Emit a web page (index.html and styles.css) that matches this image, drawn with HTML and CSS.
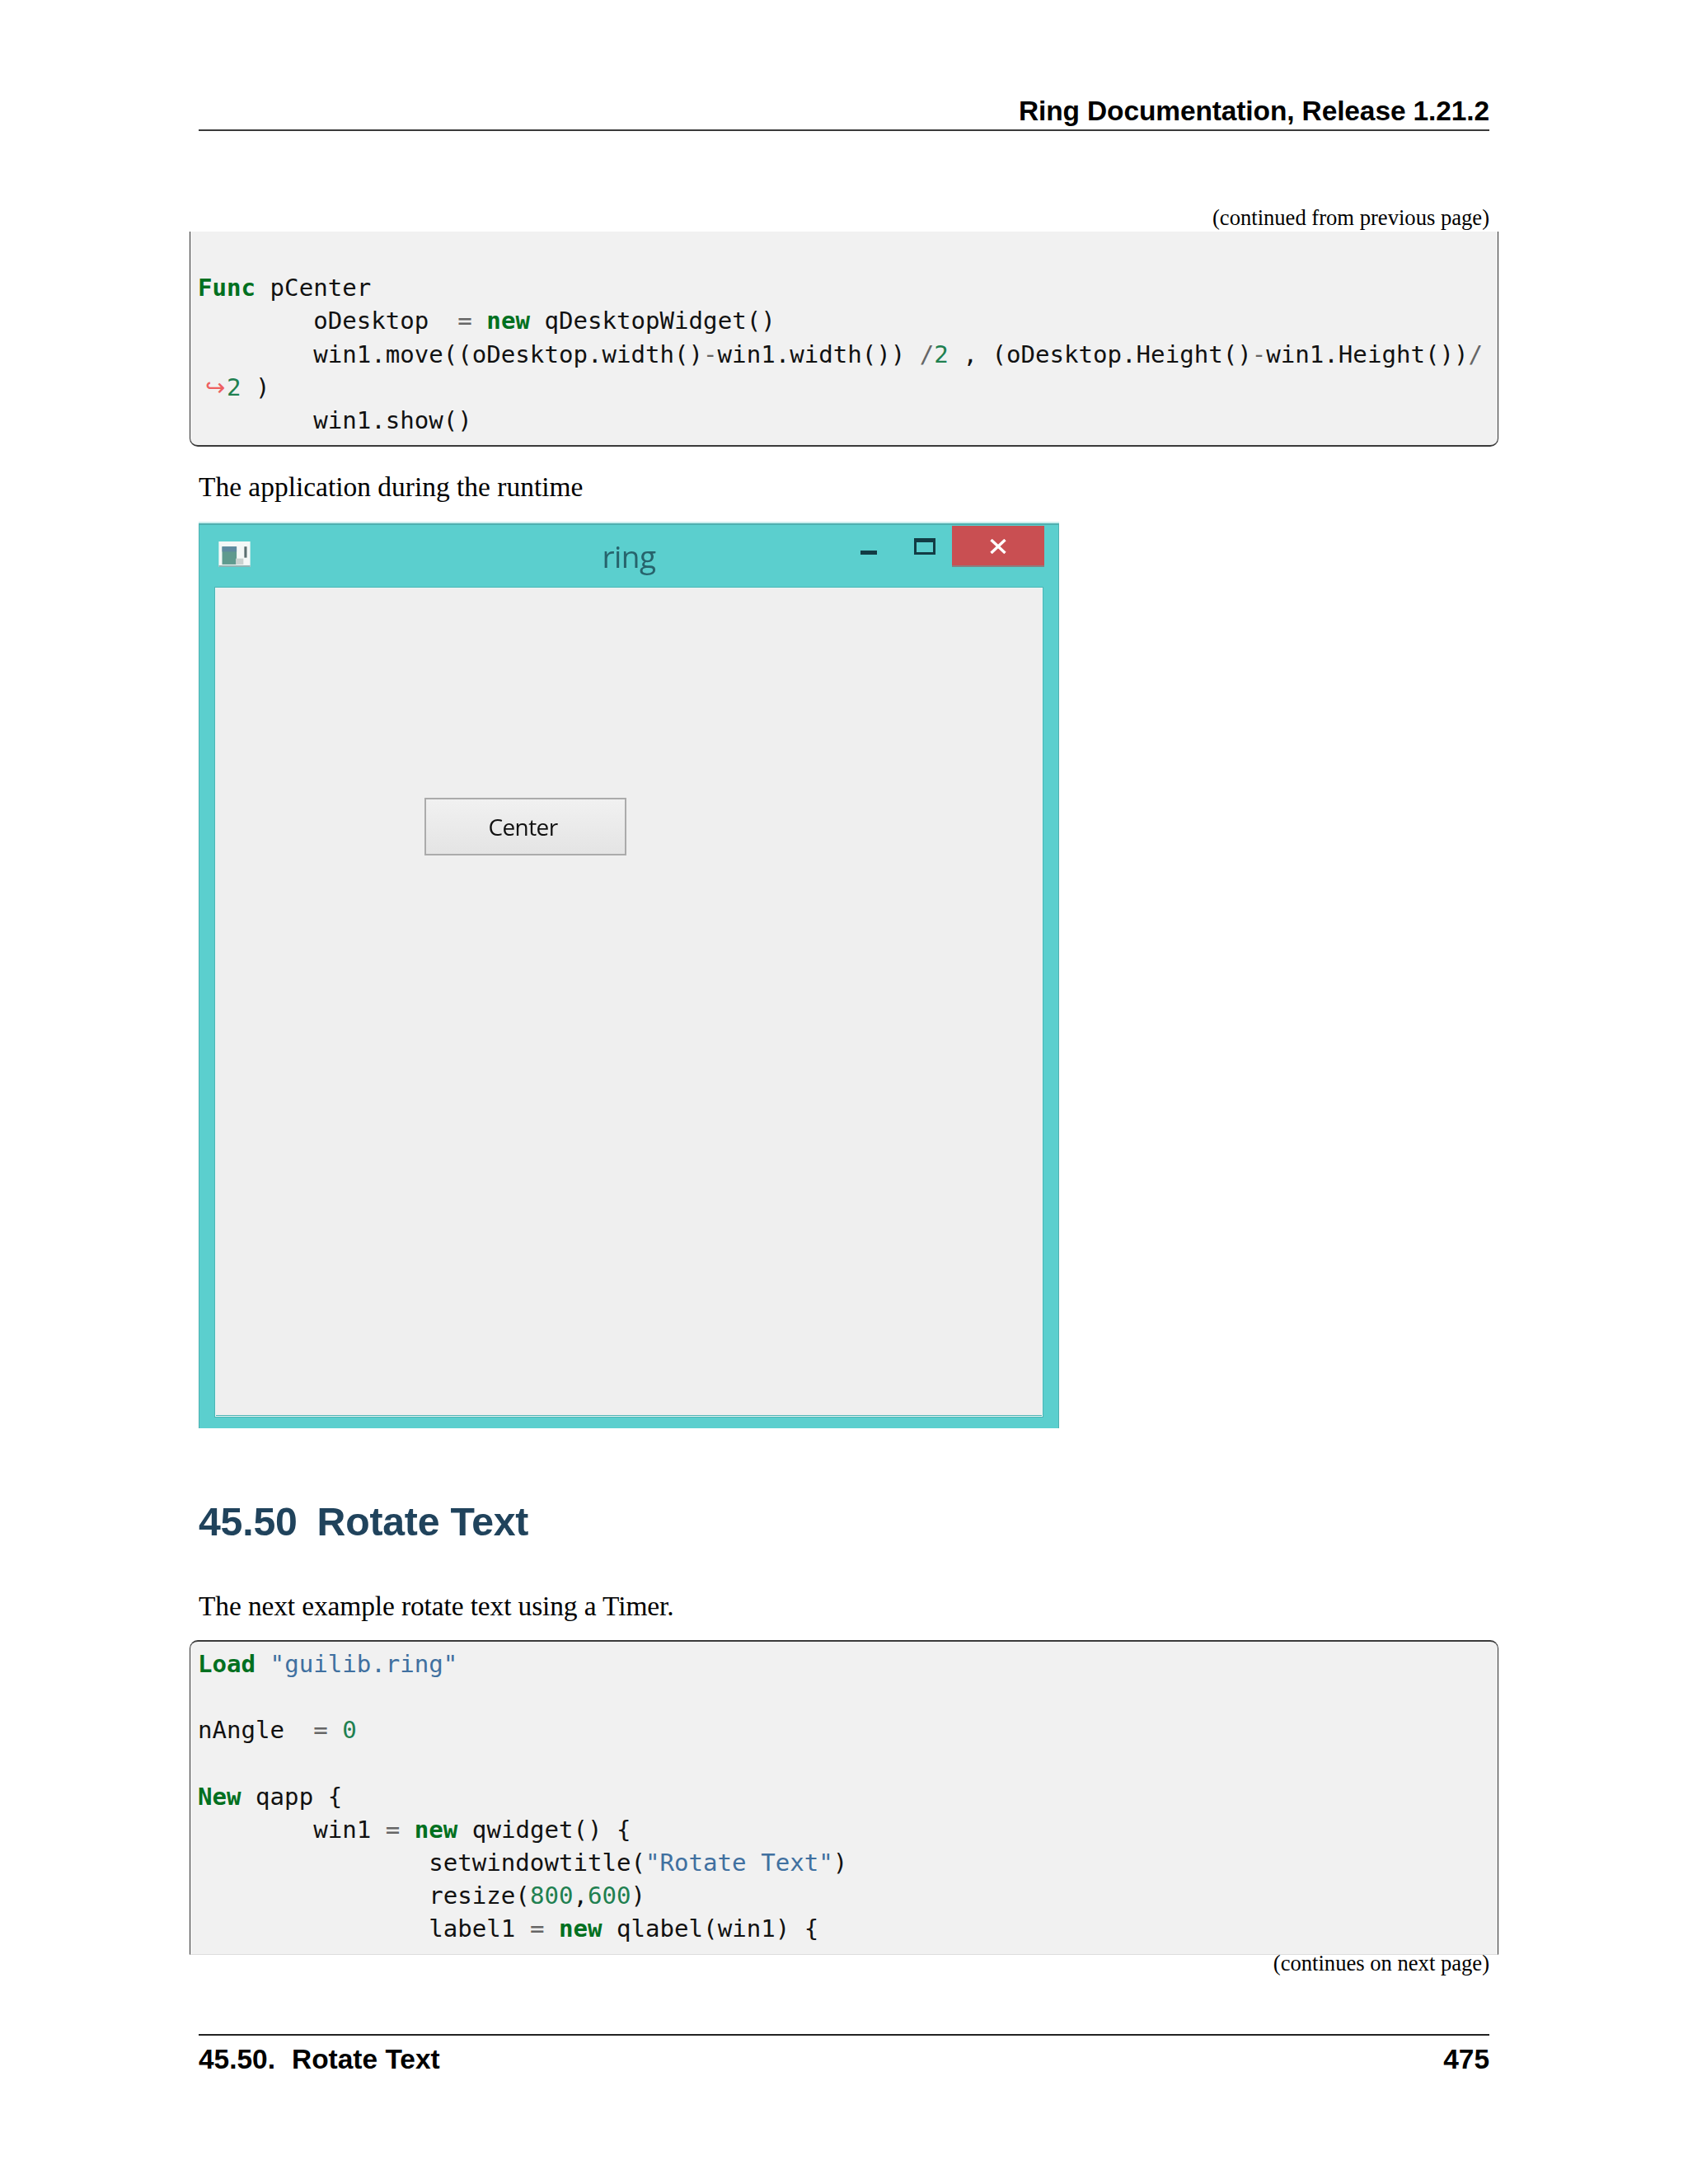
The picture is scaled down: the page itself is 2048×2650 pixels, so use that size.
FILE: index.html
```html
<!DOCTYPE html>
<html lang="en">
<head>
<meta charset="utf-8">
<title>Ring Documentation</title>
<link rel="stylesheet" href="styles.css">
</head>
<body>
<div class="page">
  <header class="running-head">Ring Documentation, Release 1.21.2</header>

  <div class="cont cont-top">(continued from previous page)</div>
  <div class="code code-end">
    <div class="line"></div>
    <div class="line"><b>Func</b> pCenter</div>
    <div class="line">        oDesktop  <i>=</i> <b>new</b> qDesktopWidget()</div>
    <div class="line">        win1.move((oDesktop.width()<i>-</i>win1.width()) <i>/</i><u>2</u> , (oDesktop.Height()<i>-</i>win1.Height())<i>/</i></div>
    <div class="line"><s>↪</s><u>2</u> )</div>
    <div class="line">        win1.show()</div>
  </div>

  <p class="para para-first">The application during the runtime</p>

  <div class="window">
    <div class="titlebar">
      <svg class="app-icon" viewBox="0 0 37 30" width="39" height="31" aria-hidden="true">
        <rect x="0" y="0" width="37" height="30" fill="#f4f8f7"/>
        <rect x="0" y="28" width="37" height="2" fill="#8fb5b5"/>
        <rect x="4" y="6" width="17" height="21" fill="#5f9a8e"/>
        <rect x="4" y="6" width="17" height="6" fill="#5e8aa0"/>
        <rect x="30" y="6" width="3" height="13" fill="#5b6f70"/>
        <rect x="20" y="20" width="9" height="7" fill="#c9d2d0"/>
      </svg>
      <div class="win-title">ring</div>
      <div class="controls">
        <span class="ctl-min"></span>
        <span class="ctl-max"></span>
        <span class="ctl-close">
          <svg viewBox="0 0 20 18" width="20" height="18" aria-hidden="true"><path d="M1.500 1 L18.500 17 M18.500 1 L1.500 17" stroke="#fff" stroke-width="3.400" fill="none"/></svg>
        </span>
      </div>
    </div>
    <div class="client">
      <div class="push-btn">Center</div>
    </div>
  </div>

  <h2 class="section">45.50<span class="sec-gap"></span>Rotate Text</h2>

  <p class="para para-next">The next example rotate text using a Timer.</p>

  <div class="code code-start">
    <div class="line"><b>Load</b> <em>"guilib.ring"</em></div>
    <div class="line"></div>
    <div class="line">nAngle  <i>=</i> <u>0</u></div>
    <div class="line"></div>
    <div class="line"><b>New</b> qapp {</div>
    <div class="line">        win1 <i>=</i> <b>new</b> qwidget() {</div>
    <div class="line">                setwindowtitle(<em>"Rotate Text"</em>)</div>
    <div class="line">                resize(<u>800</u>,<u>600</u>)</div>
    <div class="line">                label1 <i>=</i> <b>new</b> qlabel(win1) {</div>
  </div>

  <div class="cont cont-bottom">(continues on next page)</div>

  <footer class="running-foot">
    <span>45.50.<span class="foot-gap"></span>Rotate Text</span>
    <span>475</span>
  </footer>
</div>
</body>
</html>
```

FILE: styles.css
```css
html, body {
  margin: 0;
  padding: 0;
  background: #fff;
}

.page {
  width: 2048px;
  box-sizing: border-box;
  padding: 0 241px;
  color: #000;
  font-family: "Liberation Serif", serif;
}

.running-head {
  padding: 114.8px 0 2.5px;
  border-bottom: 2px solid #3a3a3a;
  text-align: right;
  font: bold 33.46px/40px "Liberation Sans", sans-serif;
  letter-spacing: -0.1px;
}

.cont {
  text-align: right;
  font-size: 26.6px;
}

.cont-top {
  margin-top: 89.5px;
  margin-bottom: -1px;
  line-height: 30px;
}

.cont-bottom {
  line-height: 20px;
  margin-bottom: -2px;
}

.code {
  margin: 3px -11px 0;
  padding: 8.200px 9px 9.900px;
  background: #f1f1f1;
  border: 1px solid #333;
  font: 29.1px/40.2px "DejaVu Sans Mono", monospace;
  color: #111;
  overflow: hidden;
}

.line {
  min-height: 40.2px;
  white-space: pre;
}

.code-end {
  border-top: 0;
  border-bottom: 2px solid #3a3a3a;
  border-radius: 0 0 10px 10px;
}

.code-start {
  margin-top: 20.3px;
  padding-top: 7.2px;
  height: 382px;
  box-sizing: border-box;
  border-top: 2px solid #3a3a3a;
  border-bottom: 1px solid #ddd;
  border-radius: 10px 10px 0 0;
}

.code b {
  color: #007020;
  font-weight: bold;
}

.code i {
  color: #666;
  font-style: normal;
}

.code u {
  color: #208050;
  text-decoration: none;
}

.code em {
  color: #4070a0;
  font-style: normal;
}

.code s {
  display: inline-block;
  width: 26px;
  padding-left: 9px;
  color: #ee6060;
  font-family: "DejaVu Sans", sans-serif;
  text-decoration: none;
}

.para {
  margin: 0;
  font-size: 33.46px;
  line-height: 40px;
}

.para-first {
  margin-top: 29.2px;
  margin-bottom: -0.5px;
}

.para-next {
  margin-top: 55.4px;
  letter-spacing: -0.12px;
}

.window {
  margin-top: 24.3px;
  width: 1044px;
  height: 1098px;
  box-sizing: border-box;
  display: flex;
  flex-direction: column;
  background: #5bcfce;
  border: solid #4fb0b0;
  border-width: 2px 1px 0;
  box-shadow: 0 -2px 0 #cdeeee;
}

.titlebar {
  height: 75px;
  flex: none;
  display: grid;
  grid-template-columns: 1fr auto 1fr;
  align-items: start;
  padding-left: 23px;
  padding-right: 17px;
}

.app-icon {
  margin-top: 20px;
  filter: blur(0.7px);
}

.win-title {
  margin-top: 14px;
  margin-right: 6px;
  font: 400 37px/48px "Open Sans", sans-serif;
  letter-spacing: -0.5px;
  color: #27636c;
  filter: blur(0.5px);
}

.controls {
  display: flex;
  justify-content: flex-end;
  align-items: flex-start;
  margin-top: 1px;
}

.ctl-min {
  width: 20px;
  height: 5px;
  margin-top: 30px;
  background: #123c44;
  filter: blur(0.4px);
}

.ctl-max {
  width: 26px;
  height: 20px;
  margin: 15px 20px 0 45px;
  box-sizing: border-box;
  border: 3px solid #123c44;
  border-top-width: 5px;
  filter: blur(0.4px);
}

.ctl-close {
  width: 112px;
  height: 50px;
  display: flex;
  align-items: center;
  justify-content: center;
  box-sizing: border-box;
  padding-top: 2px;
  background: #c94f52;
  border-bottom: 2px solid #8a7f80;
}

.ctl-close svg {
  filter: blur(0.4px);
}

.client {
  flex: 1;
  margin: 0 18px 13px 18px;
  box-sizing: border-box;
  padding: 253.5px 0 0 254px;
  background: #efefef;
  border: 2px solid #4db5b5;
  border-width: 2px 1px 3px;
  outline: 1px solid #e8f6f6;
  outline-offset: -2px;
}

.push-btn {
  width: 245px;
  height: 70px;
  box-sizing: border-box;
  display: flex;
  align-items: center;
  justify-content: center;
  padding-right: 6px;
  background: linear-gradient(#f1f1f1, #e4e4e4);
  border: 2px solid #ababab;
  font: 28px/32px "Open Sans", sans-serif;
  letter-spacing: -0.6px;
  color: #111;
  filter: blur(0.3px);
}

.section {
  margin: 84.8px 0 0;
  font: bold 48.2px/56px "Liberation Sans", sans-serif;
  letter-spacing: -0.2px;
  color: #20435c;
}

.sec-gap {
  display: inline-block;
  width: 24px;
}

.running-foot {
  margin-top: 78px;
  padding-top: 9px;
  border-top: 2px solid #222;
  display: flex;
  justify-content: space-between;
  font: bold 33.46px/40px "Liberation Sans", sans-serif;
}

.foot-gap {
  display: inline-block;
  width: 20px;
}
```
